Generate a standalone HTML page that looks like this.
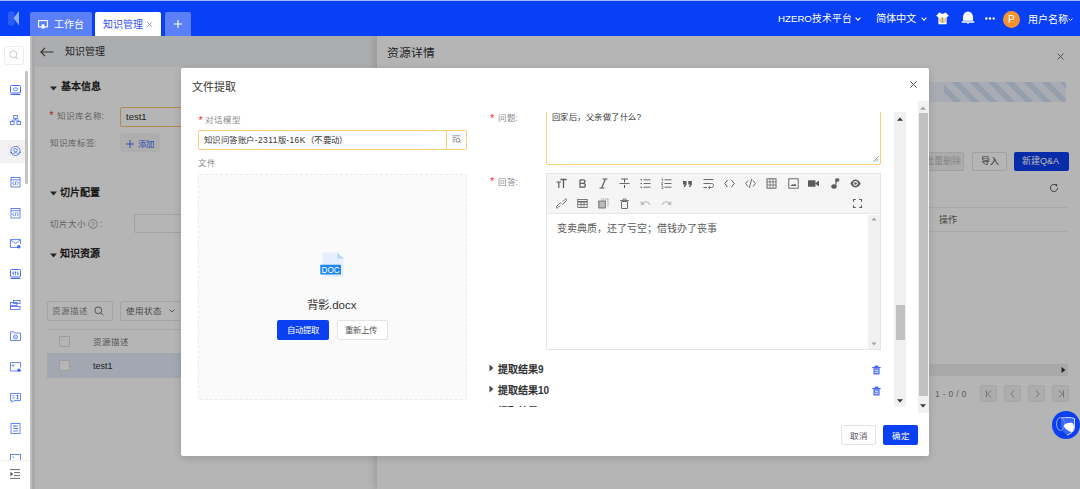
<!DOCTYPE html>
<html lang="zh-CN"><head><meta charset="utf-8">
<style>
*{box-sizing:border-box;margin:0;padding:0}
html,body{width:1080px;height:489px;overflow:hidden;background:#fff;font-family:"Liberation Sans",sans-serif;color:#333}
.a{position:absolute}
.t{white-space:nowrap;line-height:1}
svg{display:block}
/* header */
#hd{left:0;top:0;width:1080px;height:36px;background:#0840f7}
#hd .line{left:0;top:0;width:1080px;height:1px;background:#9fb6fb}
.tab{top:12px;height:24px;background:#5a7ff9;border-radius:2px 2px 0 0}
.ht{color:#fff;font-size:10.5px;top:13px}
/* sidebar */
#sb{left:0;top:36px;width:30px;height:453px;background:#fff}
/* content */
#ct{left:30px;top:36px;width:1050px;height:453px;background:#f3f4f7;overflow:hidden}
#mask{left:30px;top:36px;width:1050px;height:453px;background:rgba(0,0,0,0.29)}
/* modal */
#md{left:181px;top:68px;width:748px;height:388px;background:#fff;border-radius:2px;box-shadow:0 2px 8px rgba(0,0,0,.15)}
.lbl{font-size:8.5px;color:#8a8a8a}
.req{color:#f0313c;font-size:11px}
</style></head><body>

<!-- HEADER -->
<div id="hd" class="a">
  <div class="a line"></div>
  <svg class="a" style="left:8px;top:11px" width="12" height="15" viewBox="0 0 12 15">
    <rect x="0" y="0.5" width="6.5" height="14" rx="2" fill="#2d5cf2"/>
    <polygon points="11,0 11,14.5 5.5,7" fill="#8eb0fb"/>
  </svg>
  <div class="a tab" style="left:30px;width:62px"></div>
  <div class="a tab" style="left:95px;width:66px;background:#fff"></div>
  <div class="a tab" style="left:165px;width:26px"></div>
  <svg class="a" style="left:38px;top:20px" width="10" height="9" viewBox="0 0 10 9">
    <rect x="0.6" y="0.6" width="8.8" height="6.3" fill="none" stroke="#fff" stroke-width="1.1"/>
    <path d="M3.5 8.5 L3.5 5 Q5 3 6.5 5 L6.5 8.5Z" fill="#fff"/>
  </svg>
  <div class="a t" style="left:54px;top:19.7px;font-size:10px;color:#fff">工作台</div>
  <div class="a t" style="left:103px;top:19.7px;font-size:10px;color:#3351ee">知识管理</div>
  <svg class="a" style="left:147px;top:21.5px" width="5" height="5" viewBox="0 0 5 5"><path d="M0.3 0.3L4.7 4.7M4.7 0.3L0.3 4.7" stroke="#7d88c8" stroke-width="0.8"/></svg>
  <svg class="a" style="left:173px;top:19px" width="10" height="10" viewBox="0 0 10 10"><path d="M5 0.8V9.2M0.8 5H9.2" stroke="#fff" stroke-width="1.1"/></svg>
  <div class="a t" style="left:778px;top:14px;font-size:9.7px;color:#fff">HZERO技术平台</div>
  <svg class="a" style="left:855px;top:16.5px" width="6" height="4" viewBox="0 0 6 4"><path d="M0.6 0.6L3 3.2L5.4 0.6" fill="none" stroke="#fff" stroke-width="1.1"/></svg>
  <div class="a t" style="left:876px;top:14px;font-size:10.2px;color:#fff">简体中文</div>
  <svg class="a" style="left:921px;top:16.5px" width="6" height="4" viewBox="0 0 6 4"><path d="M0.6 0.6L3 3.2L5.4 0.6" fill="none" stroke="#fff" stroke-width="1.1"/></svg>
  <svg class="a" style="left:935.5px;top:11.5px" width="13" height="13" viewBox="0 0 13 13">
    <path d="M3.3 0.6 L5 1.3 Q6.5 2.3 8 1.3 L9.7 0.6 L12.8 3.8 L10.6 5.6 L10.6 12.3 L2.4 12.3 L2.4 5.6 L0.2 3.8 Z" fill="#fff"/>
    <rect x="3.4" y="6" width="1.3" height="4.5" rx="0.6" fill="#f7a8a0"/><rect x="4.7" y="5.6" width="1.3" height="5.3" rx="0.6" fill="#f8c24a"/><rect x="6" y="5.2" width="1.3" height="6" rx="0.6" fill="#6cc78a"/><rect x="7.3" y="5.6" width="1.3" height="5.3" rx="0.6" fill="#f8c24a"/><rect x="8.6" y="6" width="1.3" height="4.5" rx="0.6" fill="#f7b0b0"/>
  </svg>
  <svg class="a" style="left:960.5px;top:10.5px" width="14" height="14" viewBox="0 0 14 14">
    <path d="M7 0.5 C4 0.8 2 3 2 6 L2 9.8 L12 9.8 L12 6 C12 3 10 0.8 7 0.5Z" fill="#fff"/>
    <rect x="0.5" y="10.2" width="13" height="1.6" rx="0.8" fill="#fff"/>
    <path d="M5.8 11.8H8.2L7 13.2Z" fill="#fff"/>
  </svg>
  <svg class="a" style="left:985px;top:17px" width="10" height="3" viewBox="0 0 10 3"><circle cx="1.3" cy="1.5" r="1.2" fill="#fff"/><circle cx="5" cy="1.5" r="1.2" fill="#fff"/><circle cx="8.7" cy="1.5" r="1.2" fill="#fff"/></svg>
  <div class="a" style="left:1003px;top:10.5px;width:17px;height:17px;border-radius:50%;background:#f4922f"></div>
  <div class="a t" style="left:1008px;top:14.8px;font-size:10px;color:#fff">P</div>
  <div class="a t" style="left:1028px;top:14.5px;font-size:10px;color:#fff">用户名称</div>
  <svg class="a" style="left:1068px;top:18px" width="5" height="3" viewBox="0 0 5 3"><path d="M0.5 0.5L2.5 2.5L4.5 0.5" fill="none" stroke="#fff" stroke-width="0.9"/></svg>
</div>

<!-- SIDEBAR -->
<div id="sb" class="a">
  <div class="a" style="left:4px;top:9.5px;width:20px;height:19px;border:1px solid #ececec;border-radius:3px"></div>
  <svg class="a" style="left:9px;top:14px" width="10" height="10" viewBox="0 0 10 10"><circle cx="4.3" cy="4.3" r="3.5" fill="none" stroke="#bbb" stroke-width="0.8"/><path d="M6.8 6.8L9.3 9.3" stroke="#bbb" stroke-width="0.8"/></svg>
  <div class="a" style="left:0;top:104px;width:25px;height:23px;background:#f2f2f2"></div>
  <div class="a" style="left:25px;top:35px;width:2.6px;height:112.5px;background:#c4c4c4;border-radius:1.3px"></div>
  <svg class="a" style="left:9.5px;top:48.5px" width="11" height="11" viewBox="0 0 11 11"><rect x="0.5" y="0.5" width="10" height="7.5" rx="1" fill="none" stroke="#4568f6"/><ellipse cx="5.5" cy="4.2" rx="2.2" ry="1.4" fill="none" stroke="#4568f6" stroke-width="0.8"/><path d="M0.5 9.5H10.5" stroke="#4568f6" stroke-width="1"/></svg>
  <svg class="a" style="left:9.5px;top:79.3px" width="11" height="11" viewBox="0 0 11 11"><rect x="3.7" y="0.5" width="3.6" height="3" fill="none" stroke="#4568f6" stroke-width="0.8"/><rect x="0.5" y="6.5" width="3.6" height="3" fill="none" stroke="#4568f6" stroke-width="0.8"/><rect x="6.9" y="6.5" width="3.6" height="3" fill="none" stroke="#4568f6" stroke-width="0.8"/><path d="M5.5 3.5V5H2.3V6.5M5.5 5H8.7V6.5" fill="none" stroke="#4568f6" stroke-width="0.8"/></svg>
  <svg class="a" style="left:9.5px;top:110.1px" width="11" height="11" viewBox="0 0 11 11"><circle cx="5.5" cy="5" r="4.6" fill="none" stroke="#4568f6" stroke-width="0.8"/><circle cx="5.5" cy="4.2" r="1.7" fill="none" stroke="#4568f6" stroke-width="0.8"/><path d="M2 8.5 Q5.5 5 9 8.5" fill="none" stroke="#4568f6" stroke-width="0.8"/><path d="M0.5 6.5H2M9 6.5H10.5" stroke="#4568f6"/></svg>
  <svg class="a" style="left:9.5px;top:140.9px" width="11" height="11" viewBox="0 0 11 11"><rect x="1" y="0.5" width="9" height="9.5" fill="none" stroke="#4568f6" stroke-width="0.8"/><path d="M1 2.8H10" stroke="#4568f6" stroke-width="0.8"/><path d="M3.8 4.5L2.7 6.2L3.8 7.9M7.2 4.5L8.3 6.2L7.2 7.9M6 4.3L5 8.1" fill="none" stroke="#4568f6" stroke-width="0.8"/></svg>
  <svg class="a" style="left:9.5px;top:171.7px" width="11" height="11" viewBox="0 0 11 11"><rect x="1" y="0.5" width="9" height="9.5" fill="none" stroke="#4568f6" stroke-width="0.8"/><path d="M1 2.8H10" stroke="#4568f6" stroke-width="0.8"/><path d="M3.8 4.5L2.7 6.2L3.8 7.9M7.2 4.5L8.3 6.2L7.2 7.9M6 4.3L5 8.1" fill="none" stroke="#4568f6" stroke-width="0.8"/></svg>
  <svg class="a" style="left:9.5px;top:202.5px" width="11" height="11" viewBox="0 0 11 11"><path d="M8 8.5H0.5V0.5H10.5V5" fill="none" stroke="#4568f6" stroke-width="0.8"/><path d="M0.5 0.8L5.5 4.5L10.5 0.8" fill="none" stroke="#4568f6" stroke-width="0.8"/><circle cx="8.8" cy="7.8" r="1.8" fill="#4568f6"/></svg>
  <svg class="a" style="left:9.5px;top:233.3px" width="11" height="11" viewBox="0 0 11 11"><rect x="0.5" y="0.5" width="10" height="7.5" rx="1" fill="none" stroke="#4568f6"/><path d="M3.2 2.3V6.3M5.5 2.3V6.3M7.8 2.3V6.3" stroke="#4568f6" stroke-width="0.8"/><path d="M2.4 4.3H4M4.7 3.5H6.3M7 4.8H8.6" stroke="#4568f6" stroke-width="0.8"/><path d="M0.5 9.5H10.5" stroke="#4568f6"/></svg>
  <svg class="a" style="left:9.5px;top:264.1px" width="11" height="11" viewBox="0 0 11 11"><rect x="3.5" y="0.5" width="6.5" height="3" fill="none" stroke="#4568f6" stroke-width="0.8"/><rect x="0.5" y="2.5" width="6.5" height="3" fill="none" stroke="#4568f6" stroke-width="0.8"/><rect x="0.5" y="6.5" width="9.5" height="3" fill="none" stroke="#4568f6" stroke-width="0.8"/></svg>
  <svg class="a" style="left:9.5px;top:294.9px" width="11" height="11" viewBox="0 0 11 11"><path d="M0.5 9.5V0.8H4L5 2H10.5V9.5Z" fill="none" stroke="#4568f6" stroke-width="0.8"/><circle cx="5.5" cy="6" r="2" fill="none" stroke="#4568f6" stroke-width="0.8"/><path d="M4.5 6H6.5" stroke="#4568f6" stroke-width="0.8"/></svg>
  <svg class="a" style="left:9.5px;top:325.7px" width="11" height="11" viewBox="0 0 11 11"><path d="M7.5 9H0.5V0.5H10.5V5.5" fill="none" stroke="#4568f6" stroke-width="0.8"/><path d="M2.3 2.5V4.5M3.6 2.5V4.5" stroke="#4568f6" stroke-width="0.8"/><circle cx="9" cy="8.3" r="1.8" fill="#4568f6"/></svg>
  <svg class="a" style="left:9.5px;top:356.5px" width="11" height="11" viewBox="0 0 11 11"><path d="M0.5 0.5H10.5V7.5H4L2 9.5V7.5H0.5Z" fill="none" stroke="#4568f6" stroke-width="0.8"/><path d="M2.3 2.8H4.5M2.3 5H4.5" stroke="#4568f6" stroke-width="0.8"/><path d="M7.5 1.8V6.2M6.3 3.2L7.5 1.8L8.7 3.2M6.3 4.8L7.5 6.2L8.7 4.8" fill="none" stroke="#4568f6" stroke-width="0.8"/></svg>
  <svg class="a" style="left:9.5px;top:387.3px" width="11" height="11" viewBox="0 0 11 11"><rect x="1" y="0.5" width="9" height="10" fill="none" stroke="#4568f6" stroke-width="0.8"/><path d="M3 3H8M3 5.5H8M3 8H8" stroke="#4568f6" stroke-width="0.8"/><circle cx="4.5" cy="3" r="0.8" fill="#4568f6"/><circle cx="6.5" cy="5.5" r="0.8" fill="#4568f6"/></svg>
  <svg class="a" style="left:9.5px;top:418.1px" width="11" height="11" viewBox="0 0 11 11"><rect x="0.5" y="0.5" width="10" height="9" fill="none" stroke="#4568f6" stroke-width="0.8"/><path d="M2.5 2.5L4.5 4" stroke="#4568f6" stroke-width="0.8"/></svg>
  <div class="a" style="left:0;top:423.5px;width:30px;height:30px;background:#fff;border-top:1px solid #eee"></div>
  <svg class="a" style="left:10px;top:433px" width="10" height="10" viewBox="0 0 10 10">
    <path d="M0 0.6H10M4 3.6H10M4 6.6H10M0 9.4H10" stroke="#444" stroke-width="0.8"/>
    <path d="M0.5 2.8L3 5.1L0.5 7.4Z" fill="#444"/>
  </svg>
</div>

<!-- CONTENT (under mask) -->
<div id="ct" class="a">
  <div class="a" style="left:2.4px;top:0;width:2.6px;height:453px;background:#eeeeee"></div>
  <!-- left page header -->
  <svg class="a" style="left:10px;top:11px" width="14" height="10" viewBox="0 0 14 10"><path d="M13.5 5H1M5 0.8L0.9 5L5 9.2" fill="none" stroke="#444" stroke-width="1.1"/></svg>
  <div class="a t" style="left:35px;top:10.5px;font-size:10px;color:#333">知识管理</div>
  <!-- card -->
  <div class="a" style="left:5px;top:31px;width:342px;height:422px;background:#fff">
    <svg class="a" style="left:15px;top:19px" width="7" height="5" viewBox="0 0 7 5"><path d="M0 0.5H7L3.5 4.5Z" fill="#333"/></svg>
    <div class="a t" style="left:25.5px;top:15.2px;font-size:10px;font-weight:bold;color:#222">基本信息</div>
    <div class="a t req" style="left:14.3px;top:43px">*</div>
    <div class="a t lbl" style="left:21.5px;top:44.5px">知识库名称:</div>
    <div class="a" style="left:85px;top:40px;width:260px;height:20px;border:1px solid #f6c66a;border-radius:2px"></div>
    <div class="a t" style="left:91px;top:45px;font-size:9.5px;color:#333">test1</div>
    <div class="a t lbl" style="left:14.5px;top:71.5px">知识库标签:</div>
    <div class="a" style="left:85px;top:66px;width:40px;height:19px;background:#f5f5f5;border-radius:2px"></div>
    <svg class="a" style="left:91px;top:73px" width="8" height="8" viewBox="0 0 8 8"><path d="M4 0V8M0 4H8" stroke="#3a5ef5" stroke-width="0.9"/></svg>
    <div class="a t" style="left:102.5px;top:73px;font-size:8.4px;letter-spacing:0.4px;color:#3a5ef5">添加</div>

    <svg class="a" style="left:15px;top:124px" width="7" height="5" viewBox="0 0 7 5"><path d="M0 0.5H7L3.5 4.5Z" fill="#333"/></svg>
    <div class="a t" style="left:25px;top:120.5px;font-size:10px;font-weight:bold;color:#222">切片配置</div>
    <div class="a t lbl" style="left:14.5px;top:152.5px">切片大小</div>
    <svg class="a" style="left:53px;top:152px" width="10" height="10" viewBox="0 0 10 10"><circle cx="5" cy="5" r="4.3" fill="none" stroke="#999" stroke-width="0.8"/><text x="5" y="7.6" font-size="7" text-anchor="middle" fill="#999" font-family="Liberation Sans">?</text></svg>
    <div class="a t lbl" style="left:65px;top:152.5px">:</div>
    <div class="a" style="left:99px;top:147px;width:250px;height:19px;border:1px solid #e5e5e5;border-radius:2px"></div>

    <svg class="a" style="left:15px;top:186px" width="7" height="5" viewBox="0 0 7 5"><path d="M0 0.5H7L3.5 4.5Z" fill="#333"/></svg>
    <div class="a t" style="left:25px;top:182px;font-size:10px;font-weight:bold;color:#222">知识资源</div>

    <div class="a" style="left:12px;top:234px;width:66px;height:19.5px;border:1px solid #e8e8e8;border-radius:2px"></div>
    <div class="a t lbl" style="left:17px;top:239.5px;color:#888">资源描述</div>
    <svg class="a" style="left:58.5px;top:238.5px" width="10" height="10" viewBox="0 0 10 10"><circle cx="4.3" cy="4.3" r="3.4" fill="none" stroke="#666" stroke-width="0.9"/><path d="M6.8 6.8L9.3 9.3" stroke="#666" stroke-width="0.9"/></svg>
    <div class="a" style="left:85px;top:234px;width:80px;height:19.5px;border:1px solid #e8e8e8;border-radius:2px"></div>
    <div class="a t lbl" style="left:91px;top:239.5px;color:#666">使用状态</div>
    <svg class="a" style="left:134px;top:242px" width="6" height="4" viewBox="0 0 6 4"><path d="M0.5 0.5L3 3L5.5 0.5" fill="none" stroke="#666" stroke-width="0.9"/></svg>

    <div class="a" style="left:12px;top:262px;width:330px;height:1px;background:#eee"></div>
    <div class="a" style="left:23.5px;top:269px;width:11px;height:11px;border:1px solid #ddd;border-radius:1px;background:#fff"></div>
    <div class="a t lbl" style="left:58px;top:270.5px;color:#777">资源描述</div>
    <div class="a" style="left:12px;top:286px;width:330px;height:25px;background:#e5ecfb"></div>
    <div class="a" style="left:23.5px;top:293px;width:11px;height:11px;border:1px solid #ddd;border-radius:1px;background:#fff"></div>
    <div class="a t" style="left:58px;top:294.5px;font-size:9px;color:#333">test1</div>
  </div>
  <!-- drawer -->
  <div class="a" style="left:347px;top:0;width:703px;height:453px;background:#fff;box-shadow:-3px 0 7px rgba(0,0,0,.13)">
    <div class="a t" style="left:9.8px;top:12.2px;font-size:11.8px;color:#333">资源详情</div>
    <svg class="a" style="left:680px;top:17px" width="7" height="7" viewBox="0 0 7 7"><path d="M0.5 0.5L6.5 6.5M6.5 0.5L0.5 6.5" stroke="#666" stroke-width="0.9"/></svg>
    <div class="a" style="left:10px;top:46px;width:679px;height:19.5px;border-radius:2px;background:linear-gradient(90deg,#eef3fb 0,#eef3fb 20px,transparent 20px),repeating-linear-gradient(45deg,#eef3fb 0,#eef3fb 7px,#d4e0f3 7px,#d4e0f3 12.7px)"></div>
    <div class="a" style="left:552px;top:46px;width:15px;height:19.5px;background:#eef3fb"></div>
    <div class="a" style="left:530px;top:115.5px;width:57px;height:19px;background:#f3f3f3;border:1px solid #e3e3e3;border-radius:2px"></div>
    <div class="a t" style="left:548px;top:121px;font-size:9px;color:#bbb">批量删除</div>
    <div class="a" style="left:595px;top:115.5px;width:35px;height:19px;background:#fff;border:1px solid #e3e3e3;border-radius:2px"></div>
    <div class="a t" style="left:603.5px;top:121px;font-size:9px;color:#444">导入</div>
    <div class="a" style="left:637px;top:115.5px;width:55px;height:19px;background:#0b3ff0;border-radius:2px"></div>
    <div class="a t" style="left:645px;top:121px;font-size:9px;color:#fff">新建Q&amp;A</div>
    <svg class="a" style="left:672px;top:147px" width="10" height="10" viewBox="0 0 10 10"><path d="M8.6 5A3.6 3.6 0 1 1 7.4 2.3" fill="none" stroke="#555" stroke-width="1"/><path d="M6 0.8L8.4 1.6L7.6 4Z" fill="#555"/></svg>
    <div class="a" style="left:0;top:171px;width:691px;height:1px;background:#eee"></div>
    <div class="a t" style="left:562px;top:179.5px;font-size:9px;color:#666">操作</div>
    <div class="a" style="left:0;top:195px;width:691px;height:1px;background:#eee"></div>
    <div class="a" style="left:0;top:328px;width:691px;height:12px;background:#eee"></div>
    <svg class="a" style="left:684px;top:331px" width="5" height="6" viewBox="0 0 5 6"><path d="M0.5 0L4.5 3L0.5 6Z" fill="#333"/></svg>
    <div class="a t" style="left:558px;top:354px;font-size:8.5px;color:#888;letter-spacing:0.3px">1 - 0 / 0</div>
    <div class="a" style="left:603.3px;top:349.3px;width:17px;height:17.2px;background:#f4f4f4;border:1px solid #ececec;border-radius:2px"></div>
    <svg class="a" style="left:606.8px;top:353px" width="10" height="10" viewBox="0 0 10 10"><path d="M2.5 1.5V8.5M7 1.5L3.5 5L7 8.5" fill="none" stroke="#999" stroke-width="0.9"/></svg>
    <div class="a" style="left:627.3px;top:349.3px;width:17px;height:17.2px;background:#f4f4f4;border:1px solid #ececec;border-radius:2px"></div>
    <svg class="a" style="left:630.8px;top:353px" width="10" height="10" viewBox="0 0 10 10"><path d="M6 1.5L3 5L6 8.5" fill="none" stroke="#999" stroke-width="0.9"/></svg>
    <div class="a" style="left:651.2px;top:349.3px;width:17px;height:17.2px;background:#f4f4f4;border:1px solid #ececec;border-radius:2px"></div>
    <svg class="a" style="left:654.7px;top:353px" width="10" height="10" viewBox="0 0 10 10"><path d="M4 1.5L7 5L4 8.5" fill="none" stroke="#999" stroke-width="0.9"/></svg>
    <div class="a" style="left:675.2px;top:349.3px;width:17px;height:17.2px;background:#f4f4f4;border:1px solid #ececec;border-radius:2px"></div>
    <svg class="a" style="left:678.7px;top:353px" width="10" height="10" viewBox="0 0 10 10"><path d="M7.5 1.5V8.5M3 1.5L6.5 5L3 8.5" fill="none" stroke="#999" stroke-width="0.9"/></svg></div>
</div>
<div id="mask" class="a"></div>
<div class="a" style="left:30px;top:36px;width:2.4px;height:453px;background:linear-gradient(90deg,#c2c2c2,#bababa)"></div>

<!-- MODAL -->
<div id="md" class="a">
  <div class="a t" style="left:11px;top:13.5px;font-size:11px;color:#333">文件提取</div>
  <svg class="a" style="left:728.5px;top:13px" width="7" height="7" viewBox="0 0 7 7"><path d="M0.4 0.4L6.6 6.6M6.6 0.4L0.4 6.6" stroke="#555" stroke-width="1"/></svg>
  <!-- left column -->
  <div class="a t req" style="left:17.5px;top:46.5px">*</div>
  <div class="a t lbl" style="left:24px;top:48px">对话模型</div>
  <div class="a" style="left:17px;top:62px;width:268.5px;height:19.5px;border:1px solid #f9cf78;border-radius:2px"></div>
  <div class="a" style="left:265px;top:62px;width:1px;height:19.5px;background:#f9cf78"></div>
  <svg class="a" style="left:271px;top:67px" width="9" height="9" viewBox="0 0 9 9"><path d="M0.5 0.8H8M0.5 2.8H4M0.5 4.8H3M0.5 6.8H3" stroke="#777" stroke-width="0.8"/><circle cx="6" cy="5.2" r="2" fill="none" stroke="#777" stroke-width="0.9"/><path d="M7.4 6.6L8.7 7.9" stroke="#777" stroke-width="0.9"/></svg>
  <div class="a t" style="left:23px;top:67.5px;font-size:8.4px;letter-spacing:0.45px;color:#333">知识问答账户-2311版-16K（不要动）</div>
  <div class="a t lbl" style="left:17px;top:90.5px">文件</div>
  <div class="a" style="left:17px;top:105.5px;width:268.5px;height:226.5px;background:#fafafa;border:1px dashed #ebebeb;border-radius:2px"></div>
  <svg class="a" style="left:138px;top:184px" width="26" height="26" viewBox="0 0 26 26">
    <path d="M3.3 0.5H18.4L24.7 6.8V24C24.7 24.6 24.3 25 23.7 25H4.3C3.7 25 3.3 24.6 3.3 24Z" fill="#e5effd"/>
    <path d="M18.4 0.5L24.7 6.8H19.4C18.8 6.8 18.4 6.4 18.4 5.8Z" fill="#b9d5f8"/>
    <rect x="1.3" y="12.8" width="20.7" height="9.6" rx="0.5" fill="#1f87f0"/>
    <text x="11.65" y="20.6" font-size="8.2" fill="#fff" text-anchor="middle" font-family="Liberation Sans">DOC</text>
  </svg>
  <div class="a t" style="left:126px;top:232px;font-size:11.5px;color:#333">背影.docx</div>
  <div class="a" style="left:96px;top:252px;width:52px;height:19.5px;background:#0a3ff2;border-radius:2px"></div>
  <div class="a t" style="left:105.5px;top:257.5px;font-size:8.4px;color:#fff">自动提取</div>
  <div class="a" style="left:155.5px;top:252px;width:51px;height:19.5px;background:#fff;border:1px solid #e3e3e3;border-radius:2px"></div>
  <div class="a t" style="left:164px;top:257.5px;font-size:8.4px;color:#555">重新上传</div>

  <!-- right column (scroll area) -->
  <div class="a" style="left:290px;top:44px;width:436px;height:296px;overflow:hidden">
    <div class="a t req" style="left:19px;top:0.5px">*</div>
    <div class="a t lbl" style="left:26.5px;top:2px">问题:</div>
    <div class="a" style="left:75px;top:-20px;width:334.5px;height:72.5px;border:1px solid #f9cf78;border-radius:2px;background:#fff"></div>
    <svg class="a" style="left:402px;top:44px" width="6" height="6" viewBox="0 0 6 6"><path d="M5.5 0.5L0.5 5.5M5.5 3L3 5.5" stroke="#777" stroke-width="0.8"/></svg>
    <div class="a t" style="left:80.5px;top:2px;font-size:8.2px;letter-spacing:0.5px;color:#333">回家后，父亲做了什么?</div>
    <div class="a t req" style="left:19px;top:64px">*</div>
    <div class="a t lbl" style="left:26.5px;top:65.5px">回答:</div>
    <!-- editor -->
    <div class="a" style="left:75px;top:61px;width:334.5px;height:176.5px;border:1px solid #e5e5e5;background:#fff"></div>
    <div class="a" style="left:76px;top:62px;width:332.5px;height:39.5px;background:#f5f5f5;border-bottom:1px solid #e8e8e8"></div>
    <div class="a" style="left:75px;top:61px;width:0;height:0">
      <svg class="a" style="left:9.5px;top:5.3px" width="11" height="11" viewBox="0 0 11 11"><path d="M0.5 4H5M2.8 4V10" stroke="#5c5c5c" stroke-width="1.20" fill="none"/><path d="M4.5 1.5H10.5M7.5 1.5V10" stroke="#5c5c5c" stroke-width="1.30" fill="none"/></svg>
      <svg class="a" style="left:30.5px;top:5.3px" width="11" height="11" viewBox="0 0 11 11"><path d="M3 1.8H6C7.4 1.8 8 2.6 8 3.5C8 4.5 7.2 5.3 6 5.3H3M6 5.3C7.6 5.3 8.3 6.2 8.3 7.2C8.3 8.3 7.5 9.2 6 9.2H3V1.8" fill="none" stroke="#5c5c5c" stroke-width="1.2"/></svg>
      <svg class="a" style="left:51.5px;top:5.3px" width="11" height="11" viewBox="0 0 11 11"><path d="M4.5 1H9.5M1.5 10H6.5M7.3 1L3.7 10" fill="none" stroke="#5c5c5c" stroke-width="1.20"/></svg>
      <svg class="a" style="left:72.5px;top:5.3px" width="11" height="11" viewBox="0 0 11 11"><path d="M0.5 5.5H10.5" stroke="#5c5c5c" stroke-width="0.90"/><path d="M2 1H9M5.5 1V4.5M5.5 7V10" fill="none" stroke="#5c5c5c" stroke-width="1.00"/></svg>
      <svg class="a" style="left:93.5px;top:5.3px" width="11" height="11" viewBox="0 0 11 11"><path d="M3.5 1.8H10.5M3.5 5.5H10.5M3.5 9.2H10.5" stroke="#5c5c5c" stroke-width="0.90"/><circle cx="1.2" cy="1.8" r="0.8" fill="#5c5c5c"/><circle cx="1.2" cy="5.5" r="0.8" fill="#5c5c5c"/><circle cx="1.2" cy="9.2" r="0.8" fill="#5c5c5c"/></svg>
      <svg class="a" style="left:114.5px;top:5.3px" width="11" height="11" viewBox="0 0 11 11"><path d="M3.5 1.8H10.5M3.5 5.5H10.5M3.5 9.2H10.5" stroke="#5c5c5c" stroke-width="0.90"/><path d="M0.6 0.8H1.6V3M0.5 4.5H1.8L0.5 6.5H2M0.5 8H1.8V10.5H0.5" fill="none" stroke="#5c5c5c" stroke-width="0.70"/></svg>
      <svg class="a" style="left:136.0px;top:5.3px" width="11" height="11" viewBox="0 0 11 11"><path d="M1 3H4.5V6.5L3 9H1.5L2.7 6.5H1Z M6.3 3H9.8V6.5L8.3 9H6.8L8 6.5H6.3Z" fill="#5c5c5c"/></svg>
      <svg class="a" style="left:156.5px;top:5.3px" width="11" height="11" viewBox="0 0 11 11"><path d="M0.5 1.5H10.5M0.5 9.5H4M0.5 5.5H8.5C10 5.5 10.5 6.5 10.5 7.5C10.5 8.5 10 9.5 8.5 9.5H6" fill="none" stroke="#5c5c5c" stroke-width="0.90"/><path d="M7 8L5.5 9.5L7 11" fill="none" stroke="#5c5c5c" stroke-width="0.80"/></svg>
      <svg class="a" style="left:178.1px;top:5.3px" width="11" height="11" viewBox="0 0 11 11"><path d="M3.5 2L0.8 5.5L3.5 9M7.5 2L10.2 5.5L7.5 9" fill="none" stroke="#5c5c5c" stroke-width="1.00"/></svg>
      <svg class="a" style="left:199.0px;top:5.3px" width="11" height="11" viewBox="0 0 11 11"><path d="M3 2.5L0.6 5.5L3 8.5M8 2.5L10.4 5.5L8 8.5M6.8 1L4.2 10" fill="none" stroke="#5c5c5c" stroke-width="0.90"/></svg>
      <svg class="a" style="left:220.4px;top:5.3px" width="11" height="11" viewBox="0 0 11 11"><rect x="1" y="0.8" width="9" height="9.4" fill="none" stroke="#5c5c5c" stroke-width="0.90"/><path d="M1 3.9H10M1 7H10M4 0.8V10.2M7 0.8V10.2" stroke="#5c5c5c" stroke-width="0.70"/></svg>
      <svg class="a" style="left:241.5px;top:5.3px" width="11" height="11" viewBox="0 0 11 11"><rect x="0.8" y="0.8" width="9.4" height="9.4" fill="none" stroke="#5c5c5c" stroke-width="0.90"/><path d="M2.5 8L4.5 6L5.5 7L7 5.5L8.5 8Z" fill="#5c5c5c"/></svg>
      <svg class="a" style="left:262.4px;top:5.3px" width="11" height="11" viewBox="0 0 11 11"><rect x="0" y="2.2" width="7.5" height="6.6" rx="0.5" fill="#5c5c5c"/><path d="M7 5.5L11 2.5V8.5Z" fill="#5c5c5c"/></svg>
      <svg class="a" style="left:283.7px;top:5.3px" width="11" height="11" viewBox="0 0 11 11"><ellipse cx="4" cy="8.5" rx="2.7" ry="2.2" fill="#5c5c5c"/><path d="M5.7 8.5V0.8H8.8V3.2H6.8" fill="#5c5c5c" stroke="#5c5c5c" stroke-width="0.70"/></svg>
      <svg class="a" style="left:304.1px;top:5.3px" width="11" height="11" viewBox="0 0 11 11"><path d="M0.3 5.5C2 2.2 4 1.5 5.5 1.5C7 1.5 9 2.2 10.7 5.5C9 8.8 7 9.5 5.5 9.5C4 9.5 2 8.8 0.3 5.5Z" fill="#5c5c5c"/><circle cx="5.5" cy="5.5" r="2.4" fill="#f5f5f5"/><circle cx="5.5" cy="5.5" r="1.3" fill="#5c5c5c"/></svg>
      <svg class="a" style="left:9.5px;top:24.8px" width="11" height="11" viewBox="0 0 11 11"><path d="M4.2 7.5L2.2 9.5C1.5 10.2 0.8 10.2 0.5 9.8C0.2 9.5 0.2 8.8 0.9 8.1L3.5 5.5C4.2 4.8 4.9 4.8 5.2 5.2M6.8 3.5L8.8 1.5C9.5 0.8 10.2 0.8 10.5 1.2C10.8 1.5 10.8 2.2 10.1 2.9L7.5 5.5C6.8 6.2 6.1 6.2 5.8 5.8" fill="none" stroke="#5c5c5c" stroke-width="0.90"/></svg>
      <svg class="a" style="left:30.5px;top:24.8px" width="11" height="11" viewBox="0 0 11 11"><rect x="0.8" y="1.5" width="9.4" height="8" fill="none" stroke="#5c5c5c" stroke-width="0.80"/><path d="M0.8 3.8H10.2" stroke="#5c5c5c" stroke-width="1.40"/><path d="M0.8 6.5H10.2M4 3.8V9.5M7 3.8V9.5" stroke="#5c5c5c" stroke-width="0.70"/></svg>
      <svg class="a" style="left:51.5px;top:24.8px" width="11" height="11" viewBox="0 0 11 11"><rect x="0.8" y="3" width="6.5" height="7" fill="#bbb" stroke="#5c5c5c" stroke-width="0.80"/><path d="M3 1H10V8.5" fill="none" stroke="#5c5c5c" stroke-width="0.70" stroke-dasharray="1.2 1"/></svg>
      <svg class="a" style="left:72.5px;top:24.8px" width="11" height="11" viewBox="0 0 11 11"><path d="M1 2.5H10M4 2.5V1H7V2.5" fill="none" stroke="#5c5c5c" stroke-width="0.80"/><rect x="2.5" y="3.5" width="6" height="7" rx="0.5" fill="none" stroke="#5c5c5c" stroke-width="0.90"/></svg>
      <svg class="a" style="left:93.5px;top:24.8px" width="11" height="11" viewBox="0 0 11 11"><path d="M2 5.5C4 3 8 3 10 7" fill="none" stroke="#bdbdbd" stroke-width="1.10"/><path d="M0.5 3L1 7.5L5 6Z" fill="#bdbdbd"/></svg>
      <svg class="a" style="left:114.5px;top:24.8px" width="11" height="11" viewBox="0 0 11 11"><path d="M9 5.5C7 3 3 3 1 7" fill="none" stroke="#bdbdbd" stroke-width="1.10"/><path d="M10.5 3L10 7.5L6 6Z" fill="#bdbdbd"/></svg>
      <svg class="a" style="left:306.3px;top:24.8px" width="11" height="11" viewBox="0 0 11 11"><path d="M1.5 3.8V1.5H3.8M7.2 1.5H9.5V3.8M9.5 7.2V9.5H7.2M3.8 9.5H1.5V7.2" fill="none" stroke="#5c5c5c" stroke-width="1.1"/></svg>
    </div>
    <div class="a t" style="left:86px;top:111.5px;font-size:10px;color:#5c5c5c">变卖典质，还了亏空；借钱办了丧事</div>
    <div class="a" style="left:396.5px;top:102.5px;width:12.5px;height:134px;background:#f1f1f1"></div>
    <svg class="a" style="left:399px;top:104px" width="8" height="6" viewBox="0 0 8 6"><path d="M1.5 4.5L4 1.5L6.5 4.5Z" fill="#a3a3a3"/></svg>
    <svg class="a" style="left:399px;top:229px" width="8" height="6" viewBox="0 0 8 6"><path d="M1.5 1.5L4 4.5L6.5 1.5Z" fill="#a3a3a3"/></svg>

    <svg class="a" style="left:18px;top:252px" width="5" height="8" viewBox="0 0 5 8"><path d="M0.5 0.5L4.3 4L0.5 7.5Z" fill="#444"/></svg>
    <div class="a t" style="left:27px;top:253px;font-size:10px;font-weight:bold;color:#333">提取结果9</div>
    <svg class="a" style="left:18px;top:273px" width="5" height="8" viewBox="0 0 5 8"><path d="M0.5 0.5L4.3 4L0.5 7.5Z" fill="#444"/></svg>
    <div class="a t" style="left:27px;top:274px;font-size:10px;font-weight:bold;color:#333">提取结果10</div>
    <svg class="a" style="left:18px;top:294px" width="5" height="8" viewBox="0 0 5 8"><path d="M0.5 0.5L4.3 4L0.5 7.5Z" fill="#444"/></svg>
    <div class="a t" style="left:27px;top:295px;font-size:10px;font-weight:bold;color:#333">提取结果11</div>
    <svg class="a" style="left:401px;top:253px" width="9" height="10" viewBox="0 0 9 10"><path d="M2.3 2.2L3 0.6H6L6.7 2.2Z" fill="#4a6cf6"/><path d="M0.3 2.6H8.7" stroke="#3a60f5" stroke-width="1.1"/><rect x="1.4" y="3.3" width="6.2" height="6.2" rx="0.4" fill="#4a6cf6"/><rect x="2.6" y="4.6" width="3.8" height="3.6" fill="#c9d5fd"/><path d="M2.6 6.4H6.4" stroke="#5a78f6" stroke-width="0.8"/></svg>
    <svg class="a" style="left:401px;top:274px" width="9" height="10" viewBox="0 0 9 10"><path d="M2.3 2.2L3 0.6H6L6.7 2.2Z" fill="#4a6cf6"/><path d="M0.3 2.6H8.7" stroke="#3a60f5" stroke-width="1.1"/><rect x="1.4" y="3.3" width="6.2" height="6.2" rx="0.4" fill="#4a6cf6"/><rect x="2.6" y="4.6" width="3.8" height="3.6" fill="#c9d5fd"/><path d="M2.6 6.4H6.4" stroke="#5a78f6" stroke-width="0.8"/></svg>
    <!-- column scrollbar -->
    <div class="a" style="left:423px;top:0;width:12px;height:295px;background:#f1f1f1"></div><div class="a" style="left:0;top:295px;width:436px;height:1px;background:#fff"></div>
    <div class="a" style="left:424.5px;top:193px;width:9px;height:35px;background:#c1c1c1"></div>
    <svg class="a" style="left:425px;top:4px" width="8" height="6" viewBox="0 0 8 6"><path d="M1 4.8L4 1.5L7 4.8Z" fill="#333"/></svg>
    <svg class="a" style="left:425px;top:286px" width="8" height="6" viewBox="0 0 8 6"><path d="M1 1.2L4 4.5L7 1.2Z" fill="#333"/></svg>
  </div>
  <!-- modal scrollbar -->
  <div class="a" style="left:736.5px;top:33px;width:11.5px;height:312px;background:#f1f1f1"></div>
  <div class="a" style="left:738px;top:45px;width:9px;height:283px;background:#c1c1c1"></div>
  <svg class="a" style="left:738px;top:36.5px" width="8" height="6" viewBox="0 0 8 6"><path d="M1 4.8L4 1.5L7 4.8Z" fill="#a3a3a3"/></svg>
  <svg class="a" style="left:738px;top:335px" width="8" height="6" viewBox="0 0 8 6"><path d="M1 1.2L4 4.5L7 1.2Z" fill="#333"/></svg>
  <!-- footer -->
  <div class="a" style="left:660px;top:357px;width:34.5px;height:19.5px;background:#fff;border:1px solid #e3e3e3;border-radius:2px"></div>
  <div class="a t" style="left:669px;top:363.5px;font-size:8.5px;color:#555">取消</div>
  <div class="a" style="left:702px;top:357px;width:35px;height:19.5px;background:#0a3ff2;border-radius:2px"></div>
  <div class="a t" style="left:711px;top:363.5px;font-size:8.5px;color:#fff">确定</div>
</div>

<!-- floating button -->
<div class="a" style="left:1051.5px;top:410.5px;width:28px;height:28px;border-radius:50%;background:#0a3ff2"></div>
<svg class="a" style="left:1055px;top:416px" width="21" height="20" viewBox="0 0 21 20">
  <ellipse cx="5.5" cy="8" rx="4" ry="6.5" fill="none" stroke="#9fb6ff" stroke-width="0.9"/>
  <path d="M6 2C10 1.5 16 1 19.5 2.5V11C19.5 15 16 18 12 19C9 17.5 7 14 6 10Z" fill="#5a80ff" opacity="0.6"/>
  <path d="M6.5 2C10 1.5 16 1 19.5 2.5V11C19.5 15 16 18 12 19" fill="none" stroke="#e0e8ff" stroke-width="0.9"/>
  <path d="M8.5 10C10 7 14 6 17.5 7C19.5 9 19.5 14 17 16C14 15.5 11 14 8.5 10Z" fill="#fff"/>
</svg>
</body></html>
